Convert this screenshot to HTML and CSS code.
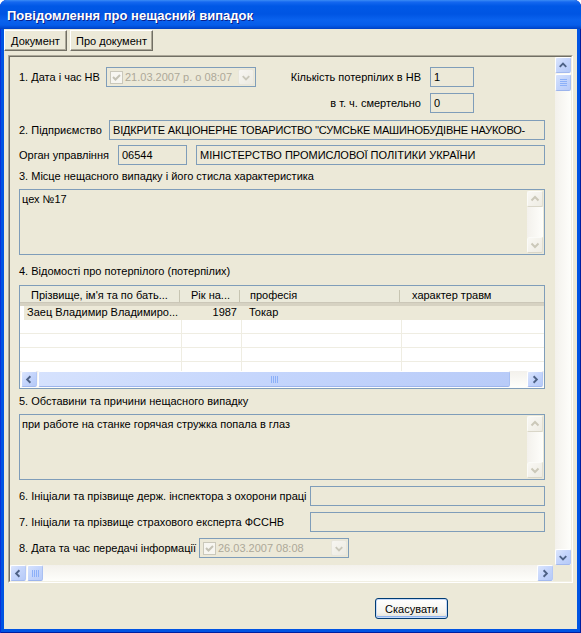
FILE: index.html
```html
<!DOCTYPE html>
<html lang="uk">
<head>
<meta charset="utf-8">
<title>Повідомлення про нещасний випадок</title>
<link rel="stylesheet" href="styles.css">
</head>
<body>
<div class="window">
  <div class="titlebar"><span class="title">Повідомлення про нещасний випадок</span></div>
  <div class="client">
    <div class="toolbar">
      <button class="tbtn doc"><u>Д</u>окумент</button>
      <button class="tbtn about">Про документ</button>
    </div>
    <div class="panel">
      <div class="panel-in">
        <div class="content">
          <div class="row1">
            <span class="lbl">1. Дата і час НВ</span>
            <div class="dtp">
              <span class="chk"><svg width="11" height="11" viewBox="0 0 11 11"><path d="M2 5 L4.5 7.5 L9 3" fill="none" stroke="#C4C2B5" stroke-width="2"/></svg></span>
              <span class="dtp-text">21.03.2007 р. о 08:07</span>
              <span class="dd-btn"><svg width="15" height="15" viewBox="0 0 15 15"><path d="M4 6 L7.5 9.5 L11 6" fill="none" stroke="#C9C7BA" stroke-width="2"/></svg></span>
            </div>
            <span class="lbl rlbl">Кількість потерпілих в НВ</span>
            <div class="field">1</div>
            <span class="lbl rlbl second">в т. ч. смертельно</span>
            <div class="field second">0</div>
          </div>

          <div class="row row2">
            <span class="lbl">2. Підприємство</span>
            <div class="field">ВІДКРИТЕ АКЦІОНЕРНЕ ТОВАРИСТВО ''СУМСЬКЕ МАШИНОБУДІВНЕ НАУКОВО-</div>
          </div>

          <div class="row row3">
            <span class="lbl">Орган управління</span>
            <div class="field">06544</div>
            <div class="field">МІНІСТЕРСТВО ПРОМИСЛОВОЇ ПОЛІТИКИ УКРАЇНИ</div>
          </div>

          <div class="sec-lbl l3">3. Місце нещасного випадку і його стисла характеристика</div>
          <div class="memo">
            <div class="memo-text">цех №17</div>
            <div class="mscroll">
              <span class="sb-btn dis"><svg width="14" height="14" viewBox="0 0 14 14"><path d="M3.5 8.5 L7 5 L10.5 8.5" fill="none" stroke="#CBC8B9" stroke-width="2"/></svg></span>
              <span class="sb-track v"></span>
              <span class="sb-btn dis"><svg width="14" height="14" viewBox="0 0 14 14"><path d="M3.5 5.5 L7 9 L10.5 5.5" fill="none" stroke="#CBC8B9" stroke-width="2"/></svg></span>
            </div>
          </div>

          <div class="sec-lbl l4">4. Відомості про потерпілого (потерпілих)</div>
          <div class="grid">
            <div class="ghead">
              <div class="gh">Прізвище, ім'я та по бать...</div>
              <div class="gh">Рік на...</div>
              <div class="gh">професія</div>
              <div class="gh">характер травм</div>
            </div>
            <div class="gbody">
              <div class="grow sel">
                <div class="gc">Заец Владимир Владимиро...</div>
                <div class="gc num">1987</div>
                <div class="gc">Токар</div>
                <div class="gc"></div>
              </div>
              <div class="grow"><div class="gc"></div><div class="gc"></div><div class="gc"></div><div class="gc"></div></div>
              <div class="grow"><div class="gc"></div><div class="gc"></div><div class="gc"></div><div class="gc"></div></div>
              <div class="grow"><div class="gc"></div><div class="gc"></div><div class="gc"></div><div class="gc"></div></div>
              <div class="grow"><div class="gc"></div><div class="gc"></div><div class="gc"></div><div class="gc"></div></div>
            </div>
            <div class="hscroll ghs">
              <span class="sb-btn"><svg width="15" height="15" viewBox="0 0 15 15"><path d="M9 4 L5.5 7.5 L9 11" fill="none" stroke="#4D6185" stroke-width="2"/></svg></span>
              <span class="sb-thumb h wide"><svg width="7" height="7" viewBox="0 0 7 7"><path d="M0.5 0V7M2.5 0V7M4.5 0V7M6.5 0V7" stroke="#8CB0F8" stroke-width="1"/></svg></span>
              <span class="sb-track h"></span>
              <span class="sb-btn"><svg width="15" height="15" viewBox="0 0 15 15"><path d="M6 4 L9.5 7.5 L6 11" fill="none" stroke="#4D6185" stroke-width="2"/></svg></span>
            </div>
          </div>

          <div class="sec-lbl l5">5. Обставини та причини нещасного випадку</div>
          <div class="memo">
            <div class="memo-text">при работе на станке горячая стружка попала в глаз</div>
            <div class="mscroll">
              <span class="sb-btn dis"><svg width="14" height="14" viewBox="0 0 14 14"><path d="M3.5 8.5 L7 5 L10.5 8.5" fill="none" stroke="#CBC8B9" stroke-width="2"/></svg></span>
              <span class="sb-track v"></span>
              <span class="sb-btn dis"><svg width="14" height="14" viewBox="0 0 14 14"><path d="M3.5 5.5 L7 9 L10.5 5.5" fill="none" stroke="#CBC8B9" stroke-width="2"/></svg></span>
            </div>
          </div>

          <div class="row row6">
            <span class="lbl">6. Ініціали та прізвище держ. інспектора з охорони праці</span>
            <div class="field"></div>
          </div>
          <div class="row row6">
            <span class="lbl">7. Ініціали та прізвище страхового експерта ФССНВ</span>
            <div class="field"></div>
          </div>
          <div class="row row8">
            <span class="lbl">8. Дата та час передачі інформації</span>
            <div class="dtp">
              <span class="chk"><svg width="11" height="11" viewBox="0 0 11 11"><path d="M2 5 L4.5 7.5 L9 3" fill="none" stroke="#C4C2B5" stroke-width="2"/></svg></span>
              <span class="dtp-text">26.03.2007 08:08</span>
              <span class="dd-btn"><svg width="15" height="15" viewBox="0 0 15 15"><path d="M4 6 L7.5 9.5 L11 6" fill="none" stroke="#C9C7BA" stroke-width="2"/></svg></span>
            </div>
          </div>
        </div>

        <div class="vscroll">
          <span class="sb-btn"><svg width="15" height="15" viewBox="0 0 15 15"><path d="M4 9 L7.5 5.5 L11 9" fill="none" stroke="#4D6185" stroke-width="2"/></svg></span>
          <span class="sb-thumb v"><svg width="7" height="7" viewBox="0 0 7 7"><path d="M0 0.5H7M0 2.5H7M0 4.5H7M0 6.5H7" stroke="#8CB0F8" stroke-width="1"/></svg></span>
          <span class="sb-track v"></span>
          <span class="sb-btn"><svg width="15" height="15" viewBox="0 0 15 15"><path d="M4 6 L7.5 9.5 L11 6" fill="none" stroke="#4D6185" stroke-width="2"/></svg></span>
        </div>

        <div class="hscroll phs">
          <span class="sb-btn"><svg width="15" height="15" viewBox="0 0 15 15"><path d="M9 4 L5.5 7.5 L9 11" fill="none" stroke="#4D6185" stroke-width="2"/></svg></span>
          <span class="sb-thumb h"><svg width="7" height="7" viewBox="0 0 7 7"><path d="M0.5 0V7M2.5 0V7M4.5 0V7M6.5 0V7" stroke="#8CB0F8" stroke-width="1"/></svg></span>
          <span class="sb-track h"></span>
          <span class="sb-btn"><svg width="15" height="15" viewBox="0 0 15 15"><path d="M6 4 L9.5 7.5 L6 11" fill="none" stroke="#4D6185" stroke-width="2"/></svg></span>
        </div>
        <div class="corner"></div>
      </div>
    </div>
    <div class="footer">
      <button class="btn">Скасувати</button>
    </div>
  </div>
</div>
</body>
</html>
```
FILE: styles.css
```css
* { box-sizing: border-box; }
html, body { margin: 0; padding: 0; }
body {
  width: 581px;
  height: 633px;
  overflow: hidden;
  background: #ffffff;
  font-family: "Liberation Sans", Arial, sans-serif;
  font-size: 11px;
  color: #000;
}

.window {
  width: 581px;
  height: 633px;
  display: flex;
  flex-direction: column;
  background: #0054E3;
  border-radius: 7px 7px 0 0;
  box-shadow: inset 1px 0 #0831D9, inset -1px 0 #001EA0, inset 0 -1px #001EA0;
}

.titlebar {
  height: 29px;
  flex: none;
  border-radius: 7px 7px 0 0;
  background: linear-gradient(#3B8CF5 0, #1568F0 2px, #0058E6 6px, #0055E3 14px, #0A62EE 20px, #065DEA 25px, #0049D0 28px, #003FC0 29px);
  display: flex;
  align-items: center;
  padding-left: 7px;
  padding-top: 1px;
}
.title {
  color: #fff;
  font-weight: bold;
  font-size: 13px;
  text-shadow: 1px 1px #0A1F8C;
}

.client {
  flex: 1;
  margin: 0 4px 4px 4px;
  background: #ECE9D8;
  display: flex;
  flex-direction: column;
}

.toolbar {
  height: 26px;
  flex: none;
  display: flex;
  gap: 3px;
  padding-top: 1px;
  align-items: flex-start;
}
.tbtn {
  height: 21px;
  margin: 0;
  padding: 0;
  font: inherit;
  color: #000;
  background: #ECE9D8;
  border: 1px solid;
  border-color: #fff #716F64 #716F64 #fff;
  box-shadow: inset -1px -1px #ACA899;
}
.tbtn.doc { width: 63px; }
.tbtn.about { width: 83px; }

.panel {
  margin-left: 4px;
  width: 565px;
  height: 528px;
  flex: none;
  border: 1px solid;
  border-color: #ACA899 #fff #fff #ACA899;
}
.panel-in {
  width: 100%;
  height: 100%;
  border: 1px solid;
  border-color: #716F64 #F1EFE2 #F1EFE2 #716F64;
  display: grid;
  grid-template-columns: 1fr 16px;
  grid-template-rows: 1fr 16px;
}

.content {
  overflow: hidden;
  padding: 0 10px 0 9px;
  line-height: 13px;
}

.lbl { white-space: nowrap; }

.field {
  height: 20px;
  border: 1px solid #7F9DB9;
  background: #ECE9D8;
  padding: 0 3px;
  line-height: 18px;
  white-space: nowrap;
  overflow: hidden;
}

.row1 {
  margin-top: 10px;
  display: grid;
  grid-template-columns: 87px 150px 1fr 44px 71px;
  grid-template-rows: 20px 20px;
  row-gap: 6px;
  align-items: center;
}
.row1 .rlbl { grid-column: 3; justify-self: end; padding-right: 9px; }
.row1 .field { grid-column: 4; }
.row1 .second { grid-row: 2; }

.row {
  display: grid;
  align-items: center;
  height: 20px;
}
.row2 { margin-top: 7px; grid-template-columns: 90px 1fr; }
.row2 .field { letter-spacing: -0.2px; }
.row3 { margin-top: 5px; grid-template-columns: 99px 69px 1fr; column-gap: 0; }
.row3 .field + .field { margin-left: 9px; }
.row6 { margin-top: 6px; grid-template-columns: 291px 1fr; }
.row8 { margin-top: 6px; grid-template-columns: 180px 150px; }

.dtp {
  height: 20px;
  border: 1px solid #7F9DB9;
  background: #ECE9D8;
  display: flex;
  align-items: center;
  padding: 0 1px 0 3px;
}
.chk {
  width: 13px;
  height: 13px;
  flex: none;
  border: 1px solid #CAC8BB;
  background: #F7F6F1;
  display: flex;
  align-items: center;
  justify-content: center;
}
.dtp-text {
  flex: 1;
  color: #ACA899;
  margin-left: 2px;
  white-space: nowrap;
}
.dd-btn {
  width: 16px;
  height: 16px;
  flex: none;
  border: 1px solid #E8E6DC;
  border-radius: 2px;
  background: linear-gradient(135deg, #F7F6F2, #ECEAE1);
  display: flex;
  align-items: center;
  justify-content: center;
}

.sec-lbl { height: 13px; white-space: nowrap; }
.l3 { margin-top: 5px; }
.l4 { margin-top: 10px; }
.l5 { margin-top: 6px; }

.memo {
  margin-top: 6px;
  height: 66px;
  border: 1px solid #7F9DB9;
  background: #ECE9D8;
  display: flex;
}
.memo-text {
  flex: 1;
  padding: 3px 0 0 2px;
  white-space: nowrap;
}
.mscroll {
  width: 16px;
  margin: 1px 1px 1px 0;
  display: flex;
  flex-direction: column;
}

/* scrollbar parts */
.sb-btn {
  width: 16px;
  height: 16px;
  flex: none;
  border-radius: 2px;
  border: 1px solid #fff;
  border-right-color: #B4C8F6;
  border-bottom-color: #A3B9EE;
  background: linear-gradient(135deg, #DCE6FD 0%, #C6D6FC 45%, #B6CAF7 100%);
  display: flex;
  align-items: center;
  justify-content: center;
}
.sb-btn.dis {
  border-color: #FBFBF8 #E2DFD2 #D9D6C8 #FBFBF8;
  background: linear-gradient(135deg, #F9F8F4, #EEECE3);
}
.sb-thumb {
  flex: none;
  border-radius: 2px;
  border: 1px solid #fff;
  border-right-color: #A9C0F2;
  border-bottom-color: #9CB4EC;
  background: linear-gradient(135deg, #D6E2FD 0%, #C4D5FC 50%, #B8CBF8 100%);
  display: flex;
  align-items: center;
  justify-content: center;
}
.sb-thumb.v { width: 16px; height: 17px; margin-top: 1px; }
.sb-thumb.h { width: 16px; height: 16px; margin-left: 1px; }
.sb-track { flex: 1; }
.sb-track.v { background: linear-gradient(to right, #F3F1EC, #FEFEFB); }
.sb-track.h { background: linear-gradient(#F3F1EC, #FEFEFB); }

.vscroll {
  display: flex;
  flex-direction: column;
  background: linear-gradient(to right, #F3F1EC, #FEFEFB);
}
.hscroll {
  display: flex;
  flex-direction: row;
  background: linear-gradient(#F3F1EC, #FEFEFB);
}
.phs { margin-right: 2px; }
.corner { background: #ECE9D8; }

/* grid */
.grid {
  margin-top: 7px;
  height: 104px;
  border: 1px solid #7F9DB9;
  background: #fff;
  display: flex;
  flex-direction: column;
  overflow: hidden;
}
.ghead {
  height: 20px;
  flex: none;
  display: grid;
  grid-template-columns: 161px 60px 160px 160px;
  background: #EBEADB;
  border-bottom: 3px solid #D6D2C2;
  box-shadow: 0 -1px #CBC7B8 inset;
}
.gh {
  padding: 3px 0 0 11px;
  white-space: nowrap;
  overflow: hidden;
  background: linear-gradient(#C7C5B2, #C7C5B2) no-repeat right 1px top 4px / 1px 12px;
}
.gh:nth-child(2) { padding-left: 10px; }
.gh:nth-child(3) { padding-left: 9px; }
.gbody { flex: 1; overflow: hidden; }
.grow {
  height: 14px;
  display: grid;
  grid-template-columns: 162px 60px 160px 160px;
  border-bottom: 1px solid #EFEDE2;
}
.gc {
  border-right: 1px solid #EFEDE2;
  padding-left: 7px;
  line-height: 13px;
  white-space: nowrap;
  overflow: hidden;
}
.gc.num { text-align: right; padding-right: 5px; }
.grow.sel { background: #ECE9D8; border-bottom: none; height: 14px; box-shadow: inset 4px 0 #fff; }
.grow.sel .gc { border-right: none; }
.ghs { height: 17px; flex: none; padding: 0 1px 1px 1px; }
.sb-thumb.wide { width: 472px; height: 16px; margin-left: 1px; }

/* footer */
.footer {
  flex: 1;
  padding: 15px 0 0 371px;
}
.btn {
  width: 73px;
  height: 21px;
  margin: 0;
  padding: 0;
  font: inherit;
  color: #000;
  border: 1px solid #003C74;
  border-radius: 3px;
  background: linear-gradient(#FFFFFF, #F4F3EE 70%, #E3E0D6);
  box-shadow: inset 0 0 0 1px #C6D9F8, inset 0 -1px 0 1px #8FB3EE;
}
```
